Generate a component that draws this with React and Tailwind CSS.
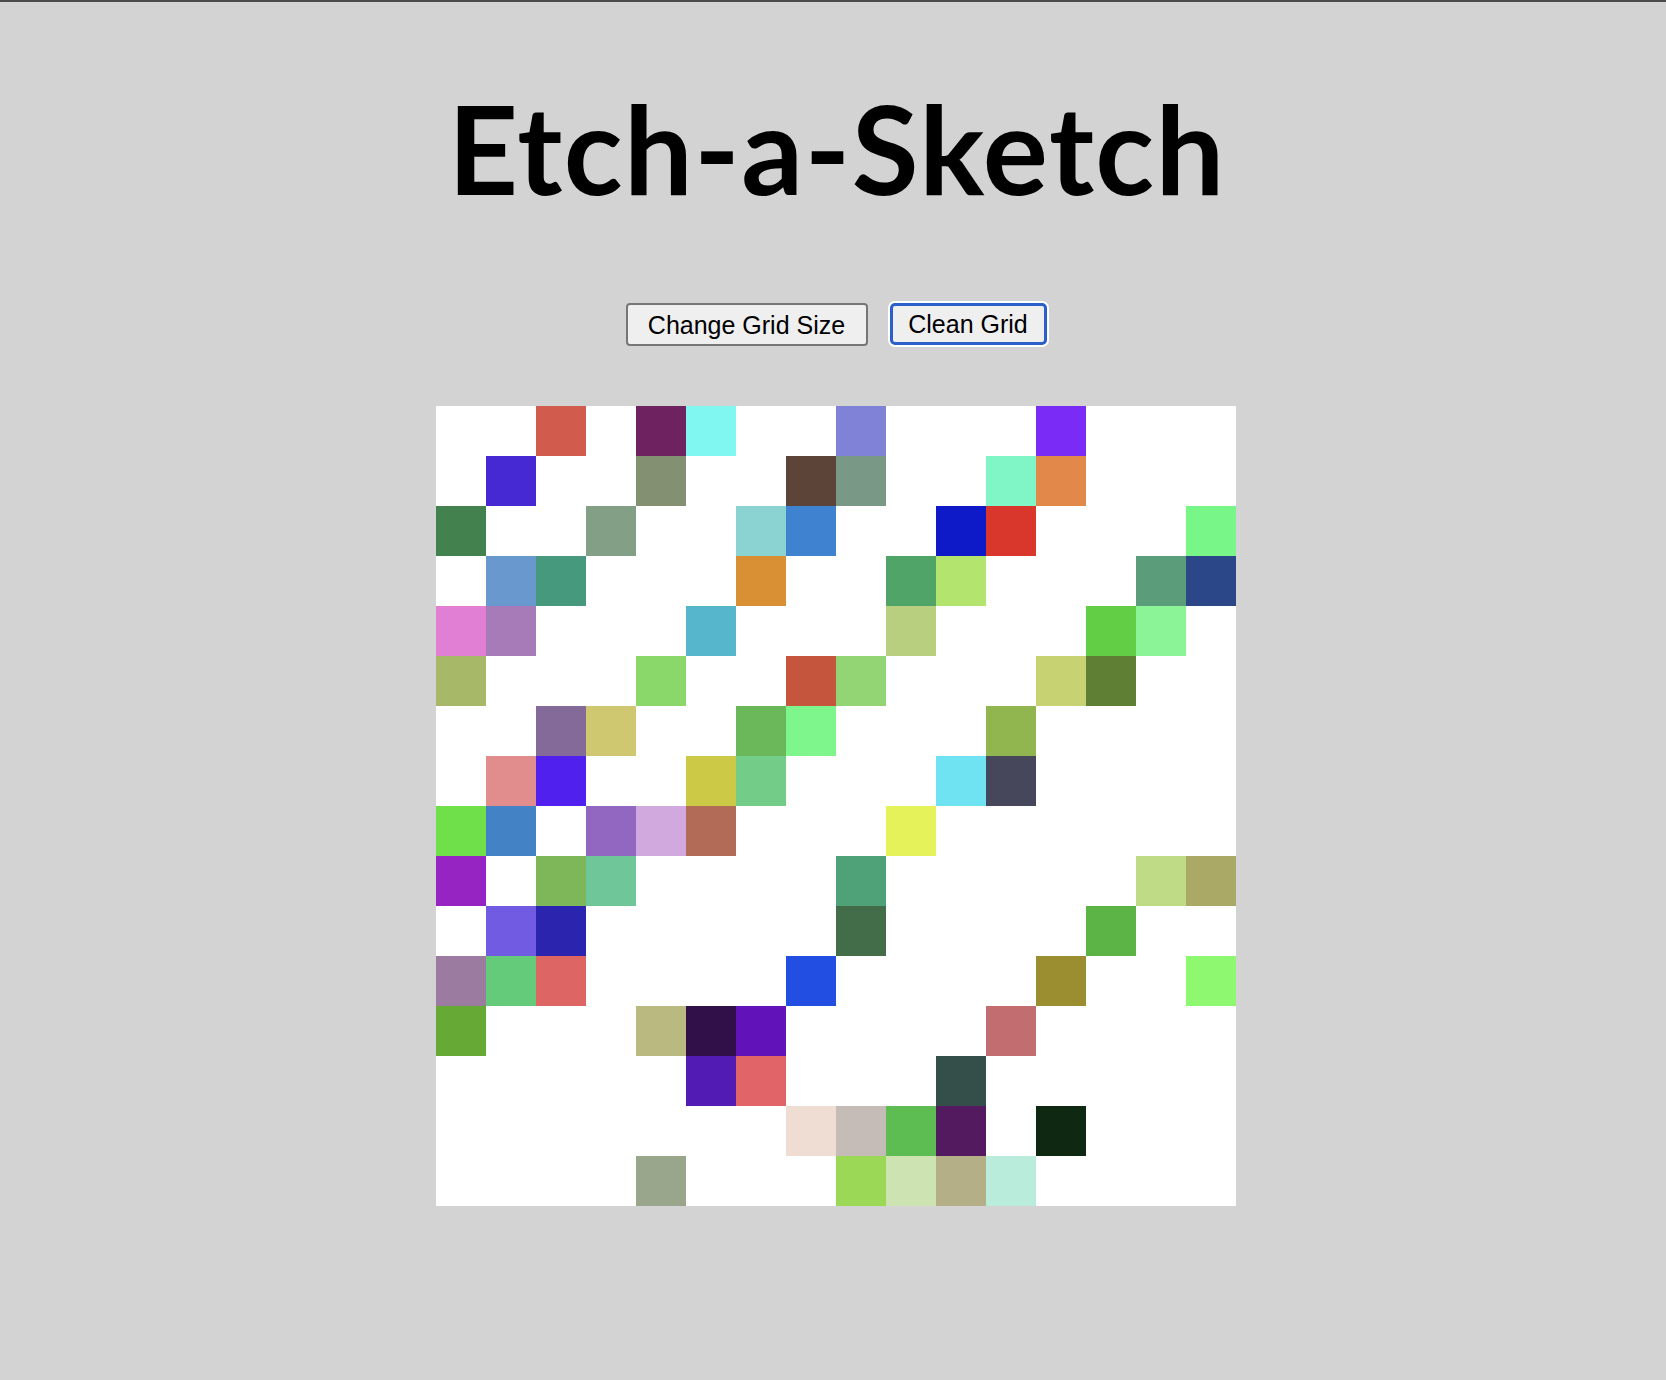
const W = null

// 16x16 board, null = untouched cell
const board = [
  [W, W, '#d15b4c', W, '#6e2260', '#80f8f1', W, W, '#8082d8', W, W, W, '#7a2bf6', W, W, W],
  [W, '#4729d3', W, W, '#849072', W, W, '#5d4438', '#799885', W, W, '#80f5c5', '#e2884a', W, W, W],
  ['#43824e', W, W, '#839f86', W, W, '#8bd3d2', '#3f82d0', W, W, '#0e19c8', '#d9362c', W, W, W, '#78f687'],
  [W, '#6898ce', '#46997d', W, W, W, '#d99035', W, W, '#50a468', '#b3e56e', W, W, W, '#5b9c7a', '#2c4788'],
  ['#e07fd4', '#a67bb8', W, W, W, '#56b6cc', W, W, W, '#b8cf7f', W, W, W, '#62ce45', '#8af496', W],
  ['#a7b868', W, W, W, '#8bd86a', W, W, '#c6553d', '#93d474', W, W, W, '#c7d373', '#5f7f35', W, W],
  [W, W, '#836a98', '#d0c870', W, W, '#6bb85b', '#7ff68b', W, W, W, '#91b650', W, W, W, W],
  [W, '#e18c8d', '#5020ee', W, W, '#ccc947', '#73cd89', W, W, W, '#70e3f2', '#46475b', W, W, W, W],
  ['#70e04a', '#4282c5', W, '#9167c2', '#d2a9de', '#b26b56', W, W, W, '#e6f25a', W, W, W, W, W, W],
  ['#9624c2', W, '#7eb75a', '#6fc699', W, W, W, W, '#4fa277', W, W, W, W, W, '#c0db86', '#aaaa66'],
  [W, '#715be2', '#2b24af', W, W, W, W, W, '#426d48', W, W, W, W, '#5cb447', W, W],
  ['#9c7ba0', '#63cb79', '#dd6664', W, W, W, W, '#224fe2', W, W, W, W, '#9b8e31', W, W, '#8df870'],
  ['#67a935', W, W, W, '#baba80', '#31104a', '#6112b9', W, W, W, W, '#c26e71', W, W, W, W],
  [W, W, W, W, W, '#521bb3', '#e06468', W, W, W, '#344f4a', W, W, W, W, W],
  [W, W, W, W, W, W, W, '#efdcd3', '#c6bcb7', '#5dbd53', '#531a5f', W, '#0f2812', W, W, W],
  [W, W, W, W, '#9aa68c', W, W, W, '#9bd856', '#cde3b2', '#b4af87', '#baecdb', W, W, W, W],
]

function Cell({ color }) {
  return <div className="h-[50px] w-[50px] bg-white" style={color ? { backgroundColor: color } : undefined} />
}

export default function App() {
  return (
    <div className="min-h-[1380px] border-t-2 border-[#4a4a4a] bg-[#d3d3d3] text-black">
      <div className="flex flex-col items-center pl-[6px] pt-[85px]">
        <h1 className="h-[122px] whitespace-nowrap pl-[2px] font-['Lato',sans-serif] text-[122px] font-bold leading-none tracking-[1.5px]">
          Etch-a-Sketch
        </h1>

        <div className="mt-[94px] flex items-center gap-[22px] font-['Liberation_Sans',Arial,sans-serif] text-[25px]">
          <button className="h-[43px] w-[242px] rounded-[4px] border-2 border-[#767676] bg-[#efefef] leading-[28px]">
            Change Grid Size
          </button>
          <button className="-mt-[1px] h-[42px] w-[157px] rounded-[5px] border-[3px] border-[#2a5fcc] bg-[#efefef] leading-[28px] ring-2 ring-white">
            Clean Grid
          </button>
        </div>

        <div className="mt-[60px] grid w-[800px] grid-cols-16">
          {board.flatMap((row, r) => row.map((c, i) => <Cell key={r + '-' + i} color={c} />))}
        </div>
      </div>
    </div>
  )
}
